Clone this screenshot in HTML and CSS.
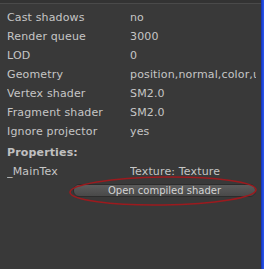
FILE: index.html
```html
<!DOCTYPE html>
<html>
<head>
<meta charset="utf-8">
<link rel="stylesheet" href="styles.css">
</head>
<body>
<div class="window">
  <div class="panel">
    <div class="topbar"></div>
    <div class="content">
      <div class="grid">
        <div class="label">Cast shadows</div><div class="value">no</div>
        <div class="label">Render queue</div><div class="value">3000</div>
        <div class="label">LOD</div><div class="value">0</div>
        <div class="label">Geometry</div><div class="value">position,normal,color,uv</div>
        <div class="label">Vertex shader</div><div class="value">SM2.0</div>
        <div class="label">Fragment shader</div><div class="value">SM2.0</div>
        <div class="label">Ignore projector</div><div class="value">yes</div>
      </div>
      <div class="heading">Properties:</div>
      <div class="grid">
        <div class="label">_MainTex</div><div class="value">Texture: Texture</div>
      </div>
      <div class="button-row">
        <button class="button">Open compiled shader</button>
        <svg class="circle" width="194" height="34" viewBox="0 0 194 34">
          <ellipse cx="96" cy="17" rx="93" ry="14" fill="none" stroke="#9c1a1e" stroke-width="1.6" transform="rotate(-0.8 96 17)"/>
        </svg>
      </div>
    </div>
  </div>
  <div class="scrollbar"></div>
</div>
</body>
</html>
```

FILE: styles.css
```css
html, body {
  margin: 0;
  padding: 0;
  background: #393939;
}
.window {
  display: flex;
  width: 264px;
  height: 269px;
  overflow: hidden;
}
.panel {
  flex: 1;
  min-width: 0;
  display: flex;
  flex-direction: column;
  background: #393939;
}
.topbar {
  height: 3px;
  background: #333333;
  border-bottom: 1px solid #4a4a4a;
}
.content {
  padding: 4px 5px 0 7px;
  font-family: "DejaVu Sans", sans-serif;
  font-size: 11px;
  color: #c6c6c6;
  letter-spacing: 0.15px;
}
.grid {
  display: grid;
  grid-template-columns: 123px 1fr;
  grid-auto-rows: 19px;
  line-height: 19px;
}
.label, .value {
  white-space: nowrap;
  overflow: hidden;
}
.heading {
  margin-top: 2px;
  line-height: 19px;
  font-weight: bold;
  color: #c0c0c0;
}
.button-row {
  position: relative;
  margin-top: 3px;
  padding-left: 66px;
  height: 13px;
}
.button {
  display: block;
  width: 183px;
  height: 13px;
  margin: 0;
  padding: 0;
  border: 1px solid #2c2c2c;
  border-radius: 6px;
  background: linear-gradient(#5c5c5c, #494949);
  color: #d4d4d4;
  font-family: "DejaVu Sans", sans-serif;
  font-size: 10px;
  line-height: 11px;
  letter-spacing: 0;
  text-align: center;
  box-sizing: border-box;
}
.circle {
  position: absolute;
  left: 60px;
  top: -10px;
}
.scrollbar {
  width: 3px;
  background: linear-gradient(to right, #1531a6, #1e46d6, #2555f2);
}
```
